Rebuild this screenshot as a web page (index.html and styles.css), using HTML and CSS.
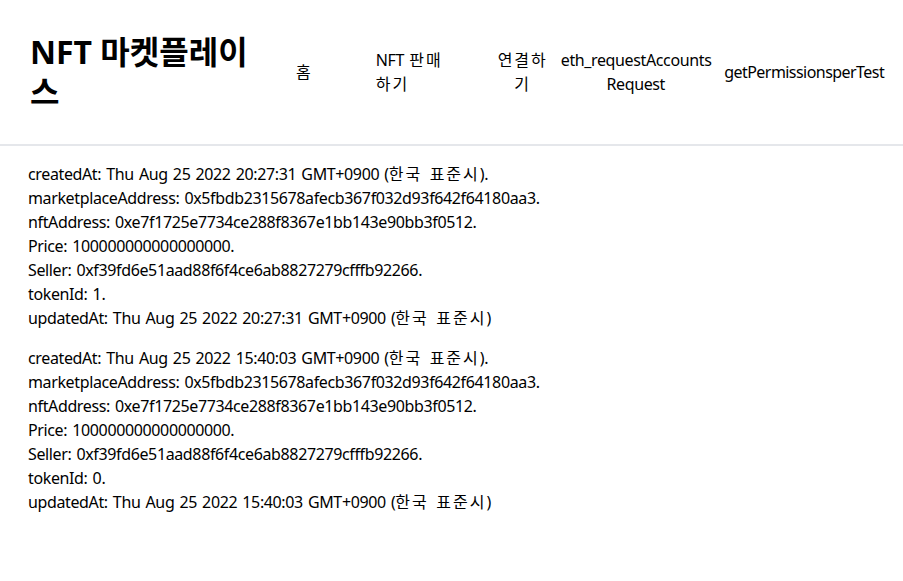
FILE: index.html
```html
<!DOCTYPE html>
<html lang="ko">
<head>
<meta charset="utf-8">
<title>NFT 마켓플레이스</title>
<link rel="stylesheet" href="styles.css">
</head>
<body>
<header class="header">
  <h1 class="title">NFT 마켓플레이스</h1>
  <nav class="nav">
    <a class="nav-item nav-home ko">홈</a>
    <a class="nav-item nav-sell">NFT <span class="ko">판매</span> <span class="ko">하기</span></a>
    <a class="nav-item nav-connect ko">연결하기</a>
    <a class="nav-item nav-eth">eth_requestAccounts Request</a>
    <a class="nav-item nav-perm">getPermissionsperTest</a>
  </nav>
</header>
<main class="content">
  <p class="item">createdAt: Thu Aug 25 2022 20:27:31 GMT+0900 (<span class="ko">한국 표준시</span>).<br>marketplaceAddress: 0x5fbdb2315678afecb367f032d93f642f64180aa3.<br>nftAddress: 0xe7f1725e7734ce288f8367e1bb143e90bb3f0512.<br>Price: 100000000000000000.<br>Seller: 0xf39fd6e51aad88f6f4ce6ab8827279cfffb92266.<br>tokenId: 1.<br>updatedAt: Thu Aug 25 2022 20:27:31 GMT+0900 (<span class="ko">한국 표준시</span>)</p>
  <p class="item">createdAt: Thu Aug 25 2022 15:40:03 GMT+0900 (<span class="ko">한국 표준시</span>).<br>marketplaceAddress: 0x5fbdb2315678afecb367f032d93f642f64180aa3.<br>nftAddress: 0xe7f1725e7734ce288f8367e1bb143e90bb3f0512.<br>Price: 100000000000000000.<br>Seller: 0xf39fd6e51aad88f6f4ce6ab8827279cfffb92266.<br>tokenId: 0.<br>updatedAt: Thu Aug 25 2022 15:40:03 GMT+0900 (<span class="ko">한국 표준시</span>)</p>
</main>
</body>
</html>
```
FILE: styles.css
```css
* { box-sizing: border-box; }
body {
  margin: 0;
  font-family: "Noto Sans", "Noto Sans CJK KR", sans-serif;
  font-size: 16px;
  line-height: 24px;
  color: #000;
  background: #fff;
}
.header {
  display: flex;
  align-items: center;
  height: 146px;
  border-bottom: 2px solid #e5e7eb;
}
.title {
  margin: 0;
  padding-left: 30px;
  width: 260px;
  flex: none;
  font-size: 32px;
  line-height: 40px;
  font-weight: 700;
}
.nav {
  display: flex;
  align-items: center;
  letter-spacing: -0.37px;
  word-spacing: 1.5px;
}
.nav-item {
  flex: none;
  color: #000;
  text-decoration: none;
}
.nav-home { margin-left: 36px; }
.nav-sell { margin-left: 63px; width: 76px; }
.nav-connect { margin-left: 44px; width: 54px; text-align: center; }
.nav-eth { margin-left: 11px; width: 150px; text-align: center; }
.nav-perm { margin-left: 13.5px; letter-spacing: -0.55px; }
.content {
  padding: 0 28px;
  letter-spacing: -0.37px;
  word-spacing: 1.3px;
}
.item {
  margin: 16px 0;
}
.ko {
  letter-spacing: 2px;
}
```
